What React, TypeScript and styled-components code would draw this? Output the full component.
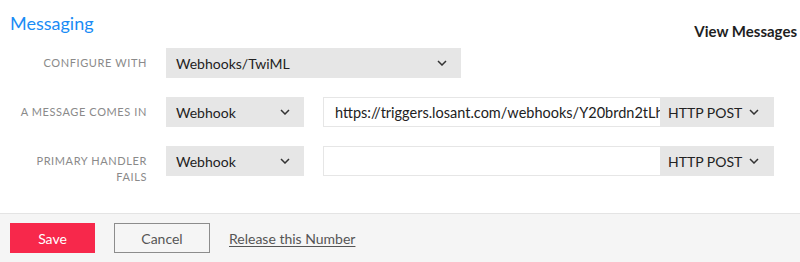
import styled, { createGlobalStyle } from "styled-components";

const GlobalStyle = createGlobalStyle`
  html, body {
    margin: 0;
    padding: 0;
    background: #ffffff;
    font-family: Lato, "Open Sans", sans-serif;
  }
`;

const Page = styled.div`
  width: 800px;
  height: 262px;
  display: flex;
  flex-direction: column;
  overflow: hidden;
`;

const Header = styled.div`
  display: flex;
  justify-content: space-between;
  align-items: flex-start;
  padding: 12px 3px 0 10px;
  height: 36px;
`;

const Title = styled.h2`
  margin: 0;
  font-size: 18px;
  line-height: 22px;
  font-weight: 400;
  color: #1a8cf5;
`;

const HeaderLink = styled.a`
  margin-top: 6px;
  font-size: 15px;
  line-height: 26px;
  font-weight: 700;
  color: #1e1e1e;
  text-decoration: none;
`;

const Form = styled.div`
  display: flex;
  flex-direction: column;
  gap: 19px;
  padding: 0 0 0 10px;
`;

const Row = styled.div`
  display: grid;
  grid-template-columns: 137px 1fr;
  column-gap: 19px;
  align-items: start;
`;

const Label = styled.div`
  text-align: right;
  font-size: 11px;
  line-height: 16px;
  padding-top: 7px;
  letter-spacing: 0.6px;
  white-space: nowrap;
  text-transform: uppercase;
  color: #8a8a8a;
`;

const Controls = styled.div`
  display: flex;
  align-items: center;
`;

const Select = styled.div<{ $w: number; $pl?: number; $pr?: number }>`
  width: ${(p) => p.$w}px;
  height: 30px;
  box-sizing: border-box;
  display: flex;
  align-items: center;
  justify-content: space-between;
  padding: 0 ${(p) => p.$pr ?? 14}px 0 ${(p) => p.$pl ?? 10}px;
  background: #e6e6e6;
  font-size: 14px;
  color: #222;
  flex-shrink: 0;
`;

const Input = styled.input`
  width: 337px;
  height: 30px;
  box-sizing: border-box;
  margin: 0 0 0 19px;
  padding: 0 0 0 11px;
  border: 1px solid #e6e6e6;
  border-right: none;
  background: #fff;
  font-family: inherit;
  font-size: 14.5px;
  color: #222;
  outline: none;
`;

const Footer = styled.div`
  margin-top: auto;
  height: 48px;
  border-top: 1px solid #e4e4e4;
  background: #f5f5f5;
  display: flex;
  align-items: center;
  padding: 0 10px;
  gap: 19px;
`;

const Button = styled.button<{ $primary?: boolean }>`
  height: 30px;
  width: ${(p) => (p.$primary ? 85 : 96)}px;
  box-sizing: border-box;
  font-family: inherit;
  font-size: 14px;
  border: 1px solid ${(p) => (p.$primary ? "#f7284b" : "#8c8c8c")};
  background: ${(p) => (p.$primary ? "#f7284b" : "transparent")};
  color: ${(p) => (p.$primary ? "#fff" : "#555")};
  cursor: pointer;
`;

const TextLink = styled.a`
  font-size: 14px;
  color: #555;
  text-decoration: underline;
  text-underline-offset: 2px;
`;

function Chevron() {
  return (
    <svg width="10" height="6" viewBox="0 0 10 6" fill="none">
      <polyline points="1,1 5,5 9,1" stroke="#333" strokeWidth="1.5" />
    </svg>
  );
}

export default function App() {
  return (
    <Page>
      <GlobalStyle />
      <Header>
        <Title>Messaging</Title>
        <HeaderLink>View Messages</HeaderLink>
      </Header>
      <Form>
        <Row>
          <Label>Configure with</Label>
          <Controls>
            <Select $w={295}>
              Webhooks/TwiML
              <Chevron />
            </Select>
          </Controls>
        </Row>
        <Row>
          <Label>A message comes in</Label>
          <Controls>
            <Select $w={138}>
              Webhook
              <Chevron />
            </Select>
            <Input readOnly value="https://triggers.losant.com/webhooks/Y20brdn2tLh8qZ4wX" />
            <Select $w={114} $pl={8} $pr={15}>
              HTTP POST
              <Chevron />
            </Select>
          </Controls>
        </Row>
        <Row>
          <Label>
            Primary handler
            <br />
            fails
          </Label>
          <Controls>
            <Select $w={138}>
              Webhook
              <Chevron />
            </Select>
            <Input readOnly value="" />
            <Select $w={114} $pl={8} $pr={15}>
              HTTP POST
              <Chevron />
            </Select>
          </Controls>
        </Row>
      </Form>
      <Footer>
        <Button $primary>Save</Button>
        <Button>Cancel</Button>
        <TextLink>Release this Number</TextLink>
      </Footer>
    </Page>
  );
}
